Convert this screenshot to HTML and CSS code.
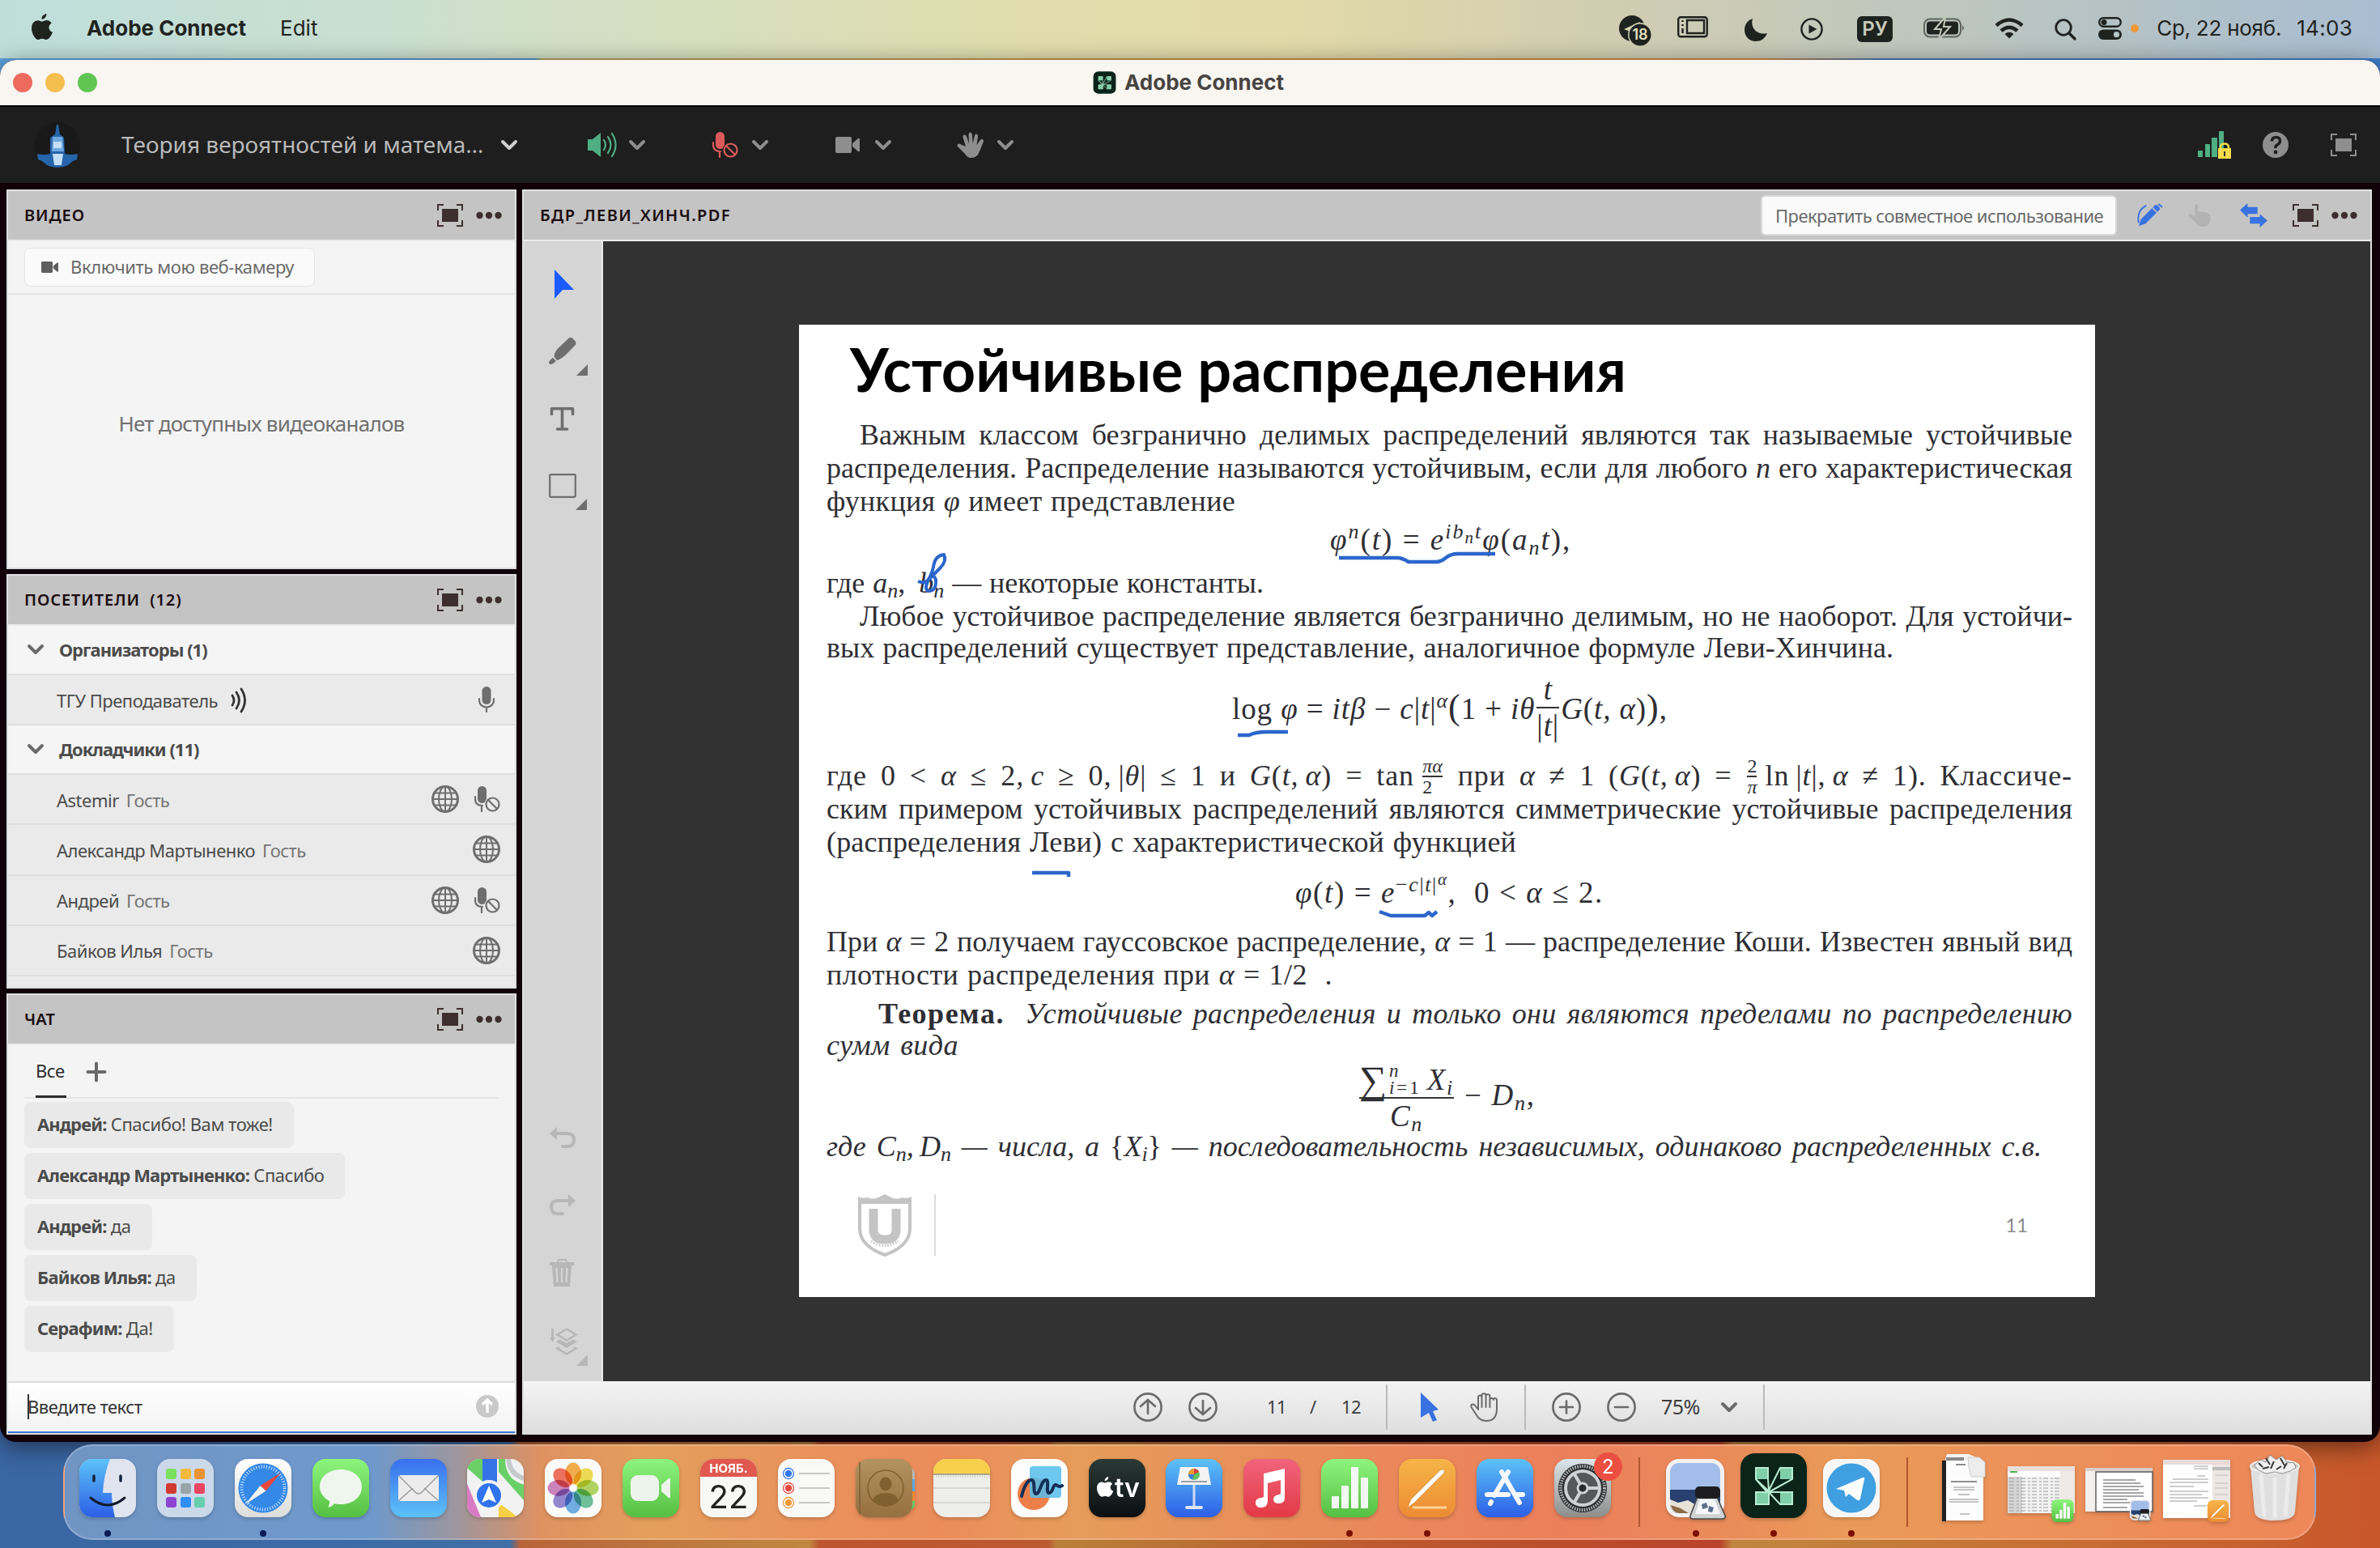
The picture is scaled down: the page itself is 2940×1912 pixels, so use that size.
FILE: index.html
```html
<!DOCTYPE html>
<html lang="ru">
<head>
<meta charset="utf-8">
<title>Adobe Connect</title>
<link rel="stylesheet" href="styles.css">
</head>
<body>
<svg class="defs" aria-hidden="true">
  <defs>
    <symbol id="chev" viewBox="0 0 22 14"><path d="M3 3l8 8 8-8" fill="none" stroke="currentColor" stroke-width="4" stroke-linecap="round" stroke-linejoin="round"/></symbol>
    <symbol id="full" viewBox="0 0 32 28"><path d="M1 8V1h7M24 1h7v7M31 20v7h-7M8 27H1v-7" fill="none" stroke="currentColor" stroke-width="2"/><path d="M6 6h20v16H6z" fill="currentColor"/></symbol>
    <symbol id="dots" viewBox="0 0 32 10"><g fill="currentColor"><circle cx="4.500" cy="5" r="4.200"/><circle cx="16" cy="5" r="4.200"/><circle cx="27.500" cy="5" r="4.200"/></g></symbol>
    <symbol id="cam" viewBox="0 0 30 20"><path d="M2 0h16a2 2 0 0 1 2 2v16a2 2 0 0 1-2 2H2a2 2 0 0 1-2-2V2a2 2 0 0 1 2-2zM21 8l7-6q2-1 2 1v14q0 2-2 1l-7-6z" fill="currentColor"/></symbol>
    <symbol id="mic" viewBox="0 0 20 32"><rect x="4.500" y="0" width="11" height="22" rx="5.500" fill="currentColor"/><path d="M1 15v2c0 5 4 8.500 9 8.500s9-3.500 9-8.500v-2M10 26v5" fill="none" stroke="currentColor" stroke-width="2.200" stroke-linecap="round"/></symbol>
    <symbol id="micoff" viewBox="0 0 32 32"><rect x="4" y="0" width="11" height="21" rx="5.500" fill="currentColor"/><path d="M1 13v3c0 5 3 8 9 8M9 25v6" fill="none" stroke="currentColor" stroke-width="2.200" stroke-linecap="round"/><circle cx="22.500" cy="22.500" r="10" fill="var(--under)"/><circle cx="22.500" cy="22.500" r="8" fill="none" stroke="currentColor" stroke-width="2.200"/><path d="M17 17l11 11" stroke="currentColor" stroke-width="2.200"/></symbol>
    <symbol id="globe" viewBox="0 0 34 34"><g fill="none" stroke="currentColor" stroke-width="2"><circle cx="17" cy="17" r="15.500" stroke-width="3"/><ellipse cx="17" cy="17" rx="8" ry="15.500"/><path d="M17 2v30M2 17h30M4 9.500h26M4 24.500h26"/></g></symbol>
    <symbol id="corner" viewBox="0 0 14 14"><path d="M14 0v14H0z" fill="currentColor"/></symbol>
    <symbol id="acon" viewBox="0 0 84 82"><rect x="1" y="1" width="82" height="80" rx="18" fill="#0b2419"/><g fill="#7fcfa9"><path d="M20 19h15v14H20zM50 19h15v14H50zM20 49h15v15H20zM50 49h15v15H50z"/></g><path d="M20 33l16 15v16H20V49h14l-14-16V19h15v14l1 14 14-28h15v14l-29 16h29v15H50L36 49" fill="none" stroke="#b8ecd2" stroke-width="2"/></symbol>
    <linearGradient id="gGreen" x1="0" y1="0" x2="0" y2="1"><stop offset="0" stop-color="#8df57d"/><stop offset="1" stop-color="#55bf42"/></linearGradient>
    <linearGradient id="gBlueUp" x1="0" y1="0" x2="0" y2="1"><stop offset="0" stop-color="#3a70ee"/><stop offset="1" stop-color="#5cc2f8"/></linearGradient>
    <linearGradient id="gBlueDn" x1="0" y1="0" x2="0" y2="1"><stop offset="0" stop-color="#5cc2f8"/><stop offset="1" stop-color="#2c5fe6"/></linearGradient>
    <linearGradient id="gOrange" x1="0" y1="0" x2="0" y2="1"><stop offset="0" stop-color="#f6b548"/><stop offset="1" stop-color="#ec8b33"/></linearGradient>
    <linearGradient id="gRed" x1="0" y1="0" x2="0" y2="1"><stop offset="0" stop-color="#f0647c"/><stop offset="1" stop-color="#e33a46"/></linearGradient>
    <linearGradient id="gWhite" x1="0" y1="0" x2="0" y2="1"><stop offset="0" stop-color="#ffffff"/><stop offset="1" stop-color="#dcdcda"/></linearGradient>
    <linearGradient id="gSteel" x1="0" y1="0" x2="0" y2="1"><stop offset="0" stop-color="#dbe5ea"/><stop offset="1" stop-color="#8d8d8b"/></linearGradient>
    <linearGradient id="gBlack" x1="0" y1="0" x2="0" y2="1"><stop offset="0" stop-color="#2b3a36"/><stop offset="1" stop-color="#0b0f12"/></linearGradient>
    <linearGradient id="gBrown" x1="0" y1="0" x2="0" y2="1"><stop offset="0" stop-color="#b3935f"/><stop offset="1" stop-color="#957040"/></linearGradient>
    <clipPath id="tile"><rect x="1" y="0" width="70" height="72" rx="16"/></clipPath>
    <symbol id="numbers" viewBox="0 0 72 72"><rect x="1" width="70" height="72" rx="16" fill="url(#gGreen)"/><g fill="#f4f8f4"><rect x="14" y="46" width="9" height="15" rx="1"/><rect x="26" y="33" width="9" height="28" rx="1"/><rect x="38" y="10" width="9" height="51" rx="1"/><rect x="50" y="23" width="9" height="38" rx="1"/></g></symbol>
    <symbol id="pages" viewBox="0 0 72 72"><rect x="1" width="70" height="72" rx="16" fill="url(#gOrange)"/><path d="M12 60l4-10 36-36q6-3 5 3L20 54z" fill="#fff" stroke="#d9a468"/><path d="M18 60h42" stroke="#fbd49a" stroke-width="3"/></symbol>
    <symbol id="preview" viewBox="0 0 74 76"><rect x="0" width="72" height="72" rx="16" fill="#f3f1f2"/><rect x="5" y="5" width="62" height="62" rx="11" fill="#a3bdea"/><path d="M5 38h62v18a11 11 0 0 1-11 11H16A11 11 0 0 1 5 56z" fill="#27406f"/><path d="M5 50l10 4 12-3 12 7 8 9H16A11 11 0 0 1 5 56z" fill="#e6e2d8"/><path d="M6 57l12 4 10 6H16Q8 66 6 57z" fill="#8b6a45"/><path d="M39 47h24l10 23q1 4-4 4H34q-5 0-4-4z" fill="#cfd3d6" stroke="#4a4a4a" stroke-width="1.600"/><path d="M42 50h18l7 18H36z" fill="#f4f6f8"/><path d="M44 56l6-2 2 6-7 2zM53 58l6 2-2 6-5-1z" fill="#5d6f8a"/><rect x="36" y="34" width="31" height="15" rx="5" fill="#1d1d1f"/></symbol>
  </defs>
</svg>

<header class="menubar">
  <svg class="apple" viewBox="0 0 28 34"><path d="M19 0c.4 3.500-2.500 7-6 7C12.600 3.500 15.800.4 19 0zM25.500 12c-5 3-4 9.500 1.500 11.500C25 28.500 22 33 18.500 33c-2 0-3-1.200-5-1.200S10.500 33 8.700 33C4.500 33 0 25 0 18.500 0 12 4 8.500 8 8.500c2.300 0 4.200 1.400 5.500 1.400S17 8.300 19.800 8.300c2.200 0 4.400 1.200 5.700 3.700z" fill="currentColor"/></svg>
  <b class="app-name">Adobe Connect</b>
  <span class="menu-item">Edit</span>
  <div class="status">
    <svg class="s-tg" viewBox="0 0 42 38"><circle cx="16" cy="16" r="16" fill="currentColor"/><path d="M6 17l20-9-3 17-7-4z" fill="#d5d2b0"/><circle cx="26" cy="24" r="15" fill="#d0cfb1"/><circle cx="26" cy="24" r="13.500" fill="currentColor"/><text x="26" y="30" class="tg-count">18</text></svg>
    <svg class="s-disp" viewBox="0 0 38 27"><g fill="none" stroke="currentColor" stroke-width="2.400"><rect x="1.200" y="1.200" width="35.500" height="24" rx="3"/><path d="M12 5h21v16H12zM6.500 5v2M6.500 10v2M6.500 15v6"/></g></svg>
    <svg class="s-moon" viewBox="0 0 28 28"><path d="M10 0C7 10 14 21 28 18 25 25 20 28 14 28 6 28 0 22 0 14 0 7 4 2 10 0z" fill="currentColor"/></svg>
    <svg class="s-play" viewBox="0 0 28 28"><circle cx="14" cy="14" r="12.600" fill="none" stroke="currentColor" stroke-width="2.400"/><path d="M10.500 8.500l10 5.500-10 5.500z" fill="currentColor"/></svg>
    <span class="lang">РУ</span>
    <svg class="s-batt" viewBox="0 0 52 26"><rect x="1" y="1.500" width="45" height="22" rx="7" fill="none" stroke="currentColor" stroke-width="2" opacity=".6"/><rect x="4" y="4.500" width="39" height="16" rx="4" fill="currentColor"/><path d="M48 9q4 3.500 0 7z" fill="currentColor" opacity=".6"/><path d="M27-1L14 14h8l-3 13 14-16h-8z" fill="currentColor" stroke="#c3c8ba" stroke-width="2"/></svg>
    <svg class="s-wifi" viewBox="0 0 36 26"><g fill="none" stroke="currentColor" stroke-width="4.400"><path d="M2 9.500Q18-4.500 34 9.500M8 16q10-8.500 20 0"/></g><path d="M12.500 20q5.500-4.500 11 0L18 25.500z" fill="currentColor"/></svg>
    <svg class="s-find" viewBox="0 0 27 27"><circle cx="11" cy="11" r="9.300" fill="none" stroke="currentColor" stroke-width="2.800"/><path d="M18 18l7 7" stroke="currentColor" stroke-width="3.400" stroke-linecap="round"/></svg>
    <svg class="s-cc" viewBox="0 0 29 28"><rect x="1.200" y="1.200" width="26.500" height="10.500" rx="5.200" fill="none" stroke="currentColor" stroke-width="2.400"/><circle cx="7" cy="6.500" r="3.500" fill="currentColor"/><rect y="15.500" width="29" height="12.500" rx="6.200" fill="currentColor"/><circle cx="22.500" cy="21.700" r="3.600" fill="#b4c4c4"/></svg>
    <span class="rec-dot"></span>
    <span class="date">Ср, 22 нояб.</span>
    <span class="time">14:03</span>
  </div>
</header>

<main class="window">
  <div class="titlebar">
    <span class="light red"></span><span class="light yellow"></span><span class="light green"></span>
    <div class="win-title"><svg viewBox="0 0 84 82"><use href="#acon"/></svg><b>Adobe Connect</b></div>
  </div>

  <div class="toolbar">
    <svg class="room-logo" viewBox="0 0 56 62"><circle cx="28" cy="31" r="28" fill="#191919"/><path d="M27 6h2l2 12 5 4 1 20q8 2 16 0l-1 7-5 2-6 5q-13 6-26 0l-6-5-5-2-1-7q8 2 16 0V22l6-4z" fill="#2565ab"/><path d="M22 21h12l2 18H21z" fill="#6fa9df"/><path d="M23 27h10v8H23zM22 42h13l-2 14h-9z" fill="#c3def5"/></svg>
    <span class="room">Теория вероятностей и матема…</span>
    <svg class="chev room-chev"><use href="#chev"/></svg>
    <svg class="t-speaker" viewBox="0 0 36 32"><path d="M0 9h6l10-8v30L6 23H0z" fill="currentColor"/><g fill="none" stroke="currentColor" stroke-width="2.200" stroke-linecap="round"><path d="M20 10q4 6 0 12M25 6q7 10 0 20M30 2q9 14 0 28"/></g></svg>
    <svg class="chev"><use href="#chev"/></svg>
    <svg class="t-mic"><use href="#micoff"/></svg>
    <svg class="chev"><use href="#chev"/></svg>
    <svg class="t-cam"><use href="#cam"/></svg>
    <svg class="chev"><use href="#chev"/></svg>
    <svg class="t-hand" viewBox="0 0 34 32"><path d="M11 18L7.500 6.500q-.5-2.500 1.500-3t3 2l3 9L14.500 3q0-2.500 2-2.500t2.300 2.500l1 11 2.200-9.500q.8-2.400 2.600-1.800t1.400 2.800L24.500 16l4.500-6q1.500-1.800 3-.8t.8 3L28 24q-3 8-10 8-5 0-8-5L1 18q-1.300-2 .3-3t3.200.3z" fill="currentColor"/></svg>
    <svg class="chev"><use href="#chev"/></svg>
    <div class="tools-right">
      <svg class="t-signal" viewBox="0 0 42 34"><g fill="#4fae83"><path d="M0 24h6v8H0zM9 16h6v16H9zM17 8h7v24h-7zM26 0h6v32h-6z"/></g><path d="M25 21h16v13H25z" fill="#f4dc4a"/><path d="M28 22v-2q0-4.500 5-4.500t5 4.500v2" fill="none" stroke="#f4dc4a" stroke-width="2.500"/><path d="M32 25h2v6h-2z" fill="#333"/></svg>
      <svg class="t-help" viewBox="0 0 32 32"><circle cx="16" cy="16" r="16" fill="currentColor"/><path d="M11.500 11.500q0-5 5-5t5 4.500q0 3-3 4.500t-2.500 4.500" fill="none" stroke="#1e1e1e" stroke-width="3.400"/><circle cx="16" cy="25" r="2.400" fill="#1e1e1e"/></svg>
      <svg class="t-full"><use href="#full"/></svg>
    </div>
  </div>

  <div class="workspace">
    <aside class="left">
      <section class="pod pod-video">
        <div class="pod-head"><h2>ВИДЕО</h2><svg class="i-full"><use href="#full"/></svg><svg class="i-dots"><use href="#dots"/></svg></div>
        <div class="video-bar"><button class="btn-cam"><svg><use href="#cam"/></svg><span>Включить мою веб-камеру</span></button></div>
        <div class="video-empty">Нет доступных видеоканалов</div>
      </section>

      <section class="pod pod-people">
        <div class="pod-head"><h2>ПОСЕТИТЕЛИ &nbsp;(12)</h2><svg class="i-full"><use href="#full"/></svg><svg class="i-dots"><use href="#dots"/></svg></div>
        <div class="group"><svg class="chev"><use href="#chev"/></svg><b>Организаторы (1)</b></div>
        <div class="person host"><span>ТГУ Преподаватель</span>
          <svg class="waves" viewBox="0 0 20 32"><g fill="none" stroke="currentColor" stroke-width="2.800" stroke-linecap="round"><path d="M2 10q4 6 0 12M7 6q7 10 0 20M13 2q9 14 0 28"/></g></svg>
          <span class="p-icons"><svg class="i-mic"><use href="#mic"/></svg></span></div>
        <div class="group"><svg class="chev"><use href="#chev"/></svg><b>Докладчики (11)</b></div>
        <div class="person"><span>Astemir</span><em>Гость</em><span class="p-icons"><svg class="i-globe"><use href="#globe"/></svg><svg class="i-micoff"><use href="#micoff"/></svg></span></div>
        <div class="person"><span>Александр Мартыненко</span><em>Гость</em><span class="p-icons"><svg class="i-globe"><use href="#globe"/></svg></span></div>
        <div class="person"><span>Андрей</span><em>Гость</em><span class="p-icons"><svg class="i-globe"><use href="#globe"/></svg><svg class="i-micoff"><use href="#micoff"/></svg></span></div>
        <div class="person"><span>Байков Илья</span><em>Гость</em><span class="p-icons"><svg class="i-globe"><use href="#globe"/></svg></span></div>
        <div class="person"></div>
      </section>

      <section class="pod pod-chat">
        <div class="pod-head"><h2>ЧАТ</h2><svg class="i-full"><use href="#full"/></svg><svg class="i-dots"><use href="#dots"/></svg></div>
        <div class="tabs"><span class="tab">Все</span><svg class="plus" viewBox="0 0 24 24"><path d="M12 1.500v21M1.500 12h21" stroke="#6a6a6a" stroke-width="4" stroke-linecap="round"/></svg></div>
        <div class="messages">
          <p class="msg"><b>Андрей:</b> Спасибо! Вам тоже!</p>
          <p class="msg"><b>Александр Мартыненко:</b> Спасибо</p>
          <p class="msg"><b>Андрей:</b> да</p>
          <p class="msg"><b>Байков Илья:</b> да</p>
          <p class="msg"><b>Серафим:</b> Да!</p>
        </div>
        <div class="chat-input"><span class="caret"></span><span>Введите текст</span>
          <svg class="send" viewBox="0 0 28 28"><circle cx="14" cy="14" r="14" fill="#c9c9c9"/><path d="M14 22V7M8 12l6-6 6 6" fill="none" stroke="#fff" stroke-width="3.400"/></svg></div>
      </section>
    </aside>

    <section class="pod share">
      <div class="pod-head"><h2>БДР_ЛЕВИ_ХИНЧ.PDF</h2>
        <button class="btn-stop">Прекратить совместное использование</button>
        <svg class="h-pen" viewBox="0 0 34 32"><path d="M2 30l3-9L23 3q2-2 4 0l2 2q2 2 0 4L11 27z" fill="#3871e0"/><path d="M20 6l7 7" stroke="#c4c4c4" stroke-width="1.600"/><path d="M2 26Q-1 9 12 3M28 1l5 4" fill="none" stroke="#3871e0" stroke-width="2"/></svg>
        <svg class="h-tap" viewBox="0 0 28 28"><path d="M8 15V2.500Q8 0 10 0t2 2.500V10q2-1.500 4 0 2-1 4 .5 2-.5 4 .7 3.500 1 3.500 5.300 0 11.500-9 11.500-6 0-9-5L1 15.500q-1.500-2.500 1-3.500 1.500-.5 3 1z" fill="#b3b3b3"/></svg>
        <svg class="h-sync" viewBox="0 0 36 32"><path d="M0 9L10 0v5h13v9H10v5zM36 23L26 14v4H13v9h13v5z" fill="#3871e0"/></svg>
        <svg class="i-full"><use href="#full"/></svg><svg class="i-dots"><use href="#dots"/></svg>
      </div>
      <div class="share-body">
        <nav class="drawbar">
          <svg class="d-arrow" viewBox="0 0 24 36"><path d="M0 0l24 25H10L0 36z" fill="#1a5cff"/></svg>
          <div class="d-item d-pen"><svg class="g" viewBox="0 0 36 36"><path d="M7 25q1-6 5-10L26 1.500q2-1.500 4 0l4 4q2 2 .5 4.500L22 23q-5 5-11 7z" fill="#6e6e6e"/><path d="M5.500 26.500l4 4q-3 4-7.500 4.500Q0 34 .5 32q2-3 5-5.500z" fill="#6e6e6e"/></svg><svg class="corner"><use href="#corner"/></svg></div>
          <svg class="d-text" viewBox="0 0 29 29"><path d="M1.500 8.500V1.700h26v6.800M14.500 2v24.500M8.500 27h12" fill="none" stroke="#6e6e6e" stroke-width="3.600" stroke-linecap="round" stroke-linejoin="round"/></svg>
          <div class="d-item d-rect"><svg class="g" viewBox="0 0 34 30"><rect x="1.200" y="1.200" width="31.600" height="27.600" rx="1" fill="none" stroke="#6e6e6e" stroke-width="2.200"/></svg><svg class="corner"><use href="#corner"/></svg></div>
          <svg class="d-undo" viewBox="0 0 32 26"><path d="M0 8l9-8v16z" fill="#b7b7b7"/><path d="M8 8h14q8 0 8 8t-8 8h-6" fill="none" stroke="#b7b7b7" stroke-width="4" stroke-linecap="round"/></svg>
          <svg class="d-redo" viewBox="0 0 32 26"><path d="M32 8l-9-8v16z" fill="#b7b7b7"/><path d="M24 8H10q-8 0-8 8t8 8h6" fill="none" stroke="#b7b7b7" stroke-width="4" stroke-linecap="round"/></svg>
          <svg class="d-trash" viewBox="0 0 30 34"><path d="M0 4h30v4h-3l-2 26H5L3 8H0zM9.500 4V1.500Q9.500 0 11 0h9q1.500 0 1.500 1.500V4h-2V2h-8v2z" fill="#b7b7b7"/><path d="M8.500 11l1 18M15 11v18M21.500 11l-1 18" stroke="#d5d5d5" stroke-width="2.200"/></svg>
          <div class="d-item d-layers"><svg class="g" viewBox="0 0 34 34"><g fill="none" stroke="#b7b7b7" stroke-width="2.600"><path d="M3.500 1v12" stroke-width="3"/><path d="M21 1.500l11.500 7L21 15.500 9.500 8.500zM12 24l-2.500 1.500L21 32.500l11.500-7L30 24"/></g><path d="M0 12h7l-3.500 6zM8 17l4.500-2.500L21 19l8.500-4.500L34 17 21 25z" fill="#b7b7b7"/></svg><svg class="corner"><use href="#corner"/></svg></div>
        </nav>
        <div class="canvas">
          <article class="slide">
            <h1>Устойчивые распределения</h1>
            <div class="ln in1">Важным классом безгранично делимых распределений являются так называемые устойчивые</div>
            <div class="ln">распределения. Распределение называются устойчивым, если для любого <i>n</i> его характеристическая</div>
            <div class="ln w505">функция <i>φ</i> имеет представление</div>
            <div class="eq eq1"><i>φ<sup>n</sup></i>(<i>t</i>) = <i>e<sup>ib<sub>n</sub>t</sup>φ</i>(<i>a<sub>n</sub>t</i>),</div>
            <div class="ln w540">где <i>a<sub>n</sub></i>,&thinsp; <i>b<sub>n</sub></i> — некоторые константы.</div>
            <div class="ln in1 h39">Любое устойчивое распределение является безгранично делимым, но не наоборот. Для устойчи-</div>
            <div class="ln w1318">вых распределений существует представление, аналогичное формуле Леви-Хинчина.</div>
            <div class="eq eq2">log <i>φ</i> = <i>itβ</i> − <i>c</i>|<i>t</i>|<sup><i>α</i></sup><span class="big">(</span>1 + <i>iθ</i><span class="frac"><i>t</i><span>|<i>t</i>|</span></span><i>G</i>(<i>t, α</i>)<span class="big">)</span>,</div>
            <div class="ln math">где 0 &lt; <i>α</i> ≤ 2<i>,&thinsp;c</i> ≥ 0,&thinsp;|<i>θ</i>| ≤ 1 и <i>G</i>(<i>t,&thinsp;α</i>) = tan&thinsp;<span class="frac sm"><i>πα</i><span>2</span></span> при <i>α</i> ≠ 1 (<i>G</i>(<i>t,&thinsp;α</i>) = <span class="frac sm"><span>2</span><i>π</i></span>&thinsp;ln&thinsp;|<i>t</i>|,&thinsp;<i>α</i> ≠ 1). Классиче-</div>
            <div class="ln">ским примером устойчивых распределений являются симметрические устойчивые распределения</div>
            <div class="ln w852">(распределения Леви) с характеристической функцией</div>
            <div class="eq eq3"><i>φ</i>(<i>t</i>) = <i>e</i><sup>−<i>c</i>|<i>t</i>|<sup><i>α</i></sup></sup>, &nbsp;0 &lt; <i>α</i> ≤ 2.</div>
            <div class="ln">При <i>α</i> = 2 получаем гауссовское распределение, <i>α</i> = 1 — распределение Коши. Известен явный вид</div>
            <div class="ln w625 last">плотности распределения при <i>α</i> = 1/2 &nbsp;.</div>
            <div class="ln in2 h39 it"><b>Теорема.</b> <i>Устойчивые распределения и только они являются пределами по распределению</i></div>
            <div class="ln w163"><i>сумм вида</i></div>
            <div class="eq eq4"><span class="frac sum"><span class="num"><span class="sigma">∑</span><span class="lim"><i>n</i><span><i>i</i>=1</span></span><i>X<sub>i</sub></i></span><i>C<sub>n</sub></i></span> − <i>D<sub>n</sub></i>,</div>
            <div class="ln w1501"><i>где C<sub>n</sub>,&thinsp;D<sub>n</sub> — числа, а </i>{<i>X<sub>i</sub></i>}<i> — последовательность независимых, одинаково распределенных с.в.</i></div>
            <footer class="slide-foot">
              <svg class="shield" viewBox="0 0 68 78"><path d="M3 8h62v34Q65 64 34 75 3 64 3 42z" fill="#fff" stroke="#c4c4c4" stroke-width="4"/><path d="M1 3q4 3 12 1 6 3 13 0l8-4 8 4q7 3 13 0 8 2 12-1v9H1z" fill="#c4c4c4"/><path d="M20 18v26q0 12 14 12t14-12V18" fill="none" stroke="#c4c4c4" stroke-width="11"/><path d="M17 58q17 11 34 0" fill="none" stroke="#d0d0d0" stroke-width="3" stroke-dasharray="2 1.500"/></svg>
              <span class="foot-line"></span><span class="page-no">11</span>
            </footer>
            <svg class="ink" viewBox="0 0 1600 1201"><g fill="none" stroke="#2b66cc" stroke-width="4.500" stroke-linejoin="round"><path d="M667 288h72q6 0 14 5h34q6 0 12-5t15-5h46"/><path stroke-width="4" d="M147 317q10 4 14-4t5-14q2-14 13-15 4 8-5 17l-14 14q-6 12 0 14 10 0 9-14-2-6-6-4"/><path d="M542 507h14q8-4 22-4h26M288 677h45v5M717 725l14 5h42l5-4 4 4 6-5"/></g></svg>
          </article>
        </div>
      </div>
      <div class="pagebar">
        <svg class="b-round b-up" viewBox="0 0 36 36"><g fill="none" stroke="currentColor" stroke-width="2.600"><circle cx="18" cy="18" r="16.600"/><path d="M18 26V11M9 17l9-8 9 8" stroke-linecap="round"/></g></svg>
        <svg class="b-round b-down" viewBox="0 0 36 36"><g fill="none" stroke="currentColor" stroke-width="2.600"><circle cx="18" cy="18" r="16.600"/><path d="M18 10v15M9 19l9 8 9-8" stroke-linecap="round"/></g></svg>
        <span class="pg-cur">11</span><span class="pg-slash">/</span><span class="pg-all">12</span>
        <div class="pg-group pointer">
          <svg class="b-cursor" viewBox="0 0 22 36"><path d="M0 0l22 21-7 2 5 11-5 2-5-11-10 6z" fill="#3871e0"/></svg>
          <svg class="b-hand" viewBox="0 0 34 36"><path d="M10 21V6q0-2.500 2.200-2.500T14.500 6v12V3.500Q14.500 1.200 17 1.200t2.500 2.300V18 4.500Q19.500 2.300 22 2.300t2.400 2.200V18 9q0-2 2.200-2T29 9q0-2.300 2-2t2 2.500V20q0 15-13 15-8 0-12-7L1.500 18q-1-3 1.500-3.500 2-.3 3.500 2z" fill="none" stroke="#6a6a6a" stroke-width="2" stroke-linejoin="round"/></svg>
        </div>
        <div class="pg-group zoom">
          <svg class="b-round" viewBox="0 0 36 36"><g fill="none" stroke="currentColor" stroke-width="2.600"><circle cx="18" cy="18" r="16.600"/><path d="M18 10.500v15M10 18h16" stroke-linecap="round"/></g></svg>
          <svg class="b-round" viewBox="0 0 36 36"><g fill="none" stroke="currentColor" stroke-width="2.600"><circle cx="18" cy="18" r="16.600"/><path d="M10 18h16" stroke-linecap="round"/></g></svg>
          <span class="pct">75%</span><svg class="chev"><use href="#chev"/></svg>
        </div>
      </div>
    </section>
  </div>
</main>

<footer class="dock">
  <div class="slot on"><svg viewBox="0 0 72 72"><g clip-path="url(#tile)"><path d="M0 0h72v72H0z" fill="#dfe4ee"/><path d="M0 0h39Q31 20 30 42h11q0 14 4 30H0z" fill="url(#gBlueDn)"/></g><path d="M19 21v6M52 21v6" stroke="#16233c" stroke-width="3.500" stroke-linecap="round"/><path d="M15 48q21 18 42 0" fill="none" stroke="#111b2c" stroke-width="3" stroke-linecap="round"/></svg></div>
  <div class="slot"><svg viewBox="0 0 72 72"><rect x="1" width="70" height="72" rx="16" fill="#cbd8ea"/><rect x="12" y="12" width="13" height="13" rx="3" fill="#7be05e"/><rect x="30" y="12" width="13" height="13" rx="3" fill="#f5b93e"/><rect x="47" y="12" width="13" height="13" rx="3" fill="#ea9334"/><rect x="12" y="30" width="13" height="13" rx="3" fill="#d13a30"/><rect x="30" y="30" width="13" height="13" rx="3" fill="#97a4aa"/><rect x="47" y="30" width="13" height="13" rx="3" fill="#ef4560"/><rect x="12" y="47" width="13" height="13" rx="3" fill="#8e44d0"/><rect x="30" y="47" width="13" height="13" rx="3" fill="#2f8df3"/><rect x="47" y="47" width="13" height="13" rx="3" fill="#64cfae"/></svg></div>
  <div class="slot on"><svg viewBox="0 0 72 72"><rect x="1" width="70" height="72" rx="16" fill="url(#gWhite)"/><circle cx="36" cy="36" r="30.500" fill="#3388e8"/><circle cx="36" cy="36" r="26.500" fill="none" stroke="#d7e9fb" stroke-width="4" stroke-dasharray="1 2.200"/><path d="M58 17L32.500 33l7 6.500z" fill="#e8483c"/><path d="M14 56l18.500-23 7 6.500z" fill="#f4f4f4"/></svg></div>
  <div class="slot"><svg viewBox="0 0 72 72"><rect x="1" width="70" height="72" rx="16" fill="url(#gGreen)"/><path d="M36 13c15 0 26 9 26 21.500S51 56 36 56c-3 0-5.500-.3-8-1-2 3-5 4.500-8 4.500 1.500-2.500 2.500-5 2-7.500-7-4-12-10-12-17.500C10 22 21 13 36 13z" fill="#eff6ee"/></svg></div>
  <div class="slot"><svg viewBox="0 0 72 72"><rect x="1" width="70" height="72" rx="16" fill="url(#gBlueUp)"/><rect x="11" y="20" width="50" height="32" rx="3" fill="#ececec"/><path d="M12 21l20 20q4 4 8 0l20-20M12 51l17-15M60 51L43 36" fill="none" stroke="#999" stroke-width="1.400"/></svg></div>
  <div class="slot"><svg viewBox="0 0 72 72"><g clip-path="url(#tile)"><path d="M0 0h72v72H0z" fill="#f1f2f1"/><path d="M0 0h20v28L0 10zM40 0h8q0 26 24 32v20L40 16z" fill="#69d067"/><path d="M20 0h18v34H20z" fill="#3474e8"/><path d="M0 28l18 44H0z" fill="#d97ac4"/><path d="M40 54l24 18H40z" fill="#f6cf45"/><path d="M52 0q2 20 20 24" fill="none" stroke="#c4c9cc" stroke-width="6"/></g><circle cx="28" cy="45" r="17" fill="#2f74ee" stroke="#f4f4f4" stroke-width="4"/><path d="M28 33l9 21-9-4-9 4z" fill="#fff"/></svg></div>
  <div class="slot"><svg viewBox="0 0 72 72"><rect x="1" width="70" height="72" rx="16" fill="#fbfbfa"/><g class="petals" transform="translate(36 36)"><ellipse cy="-18" rx="10" ry="13.500" fill="#f5a131"/><ellipse cy="-18" rx="10" ry="13.500" transform="rotate(45)" fill="#ecd936"/><ellipse cy="-18" rx="10" ry="13.500" transform="rotate(90)" fill="#a5cf4a"/><ellipse cy="-18" rx="10" ry="13.500" transform="rotate(135)" fill="#58b98a"/><ellipse cy="-18" rx="10" ry="13.500" transform="rotate(180)" fill="#5aa1e0"/><ellipse cy="-18" rx="10" ry="13.500" transform="rotate(225)" fill="#8274c9"/><ellipse cy="-18" rx="10" ry="13.500" transform="rotate(270)" fill="#c770b4"/><ellipse cy="-18" rx="10" ry="13.500" transform="rotate(315)" fill="#ee5a45"/></g></svg></div>
  <div class="slot"><svg viewBox="0 0 72 72"><rect x="1" width="70" height="72" rx="16" fill="url(#gGreen)"/><rect x="11" y="20" width="35" height="32" rx="9" fill="#edf4ec"/><path d="M49 32l9-8q2-1.500 2 1v22q0 2.500-2 1l-9-8z" fill="#edf4ec"/></svg></div>
  <div class="slot"><svg viewBox="0 0 72 72"><g clip-path="url(#tile)"><path d="M0 0h72v72H0z" fill="#f8f8f7"/><path d="M0 0h72v22H0z" fill="#e0584f"/></g><text x="36" y="17" class="cal-m">НОЯБ.</text><text x="36" y="61" class="cal-d">22</text></svg></div>
  <div class="slot"><svg viewBox="0 0 72 72"><rect x="1" width="70" height="72" rx="16" fill="#f9f9f8"/><path d="M27 18h38M27 36h38M27 54h38" stroke="#b6b6b6" stroke-width="1.600"/><g stroke="#fff" stroke-width="1.500"><circle cx="14" cy="18" r="5" fill="#3478f6"/><circle cx="14" cy="36" r="5" fill="#e5483d"/><circle cx="14" cy="54" r="5" fill="#ee9a3a"/></g><g fill="none" stroke-width="1.300"><circle cx="14" cy="18" r="6.500" stroke="#3478f6"/><circle cx="14" cy="36" r="6.500" stroke="#e5483d"/><circle cx="14" cy="54" r="6.500" stroke="#ee9a3a"/></g></svg></div>
  <div class="slot"><svg viewBox="0 0 72 72"><path d="M66 10q8 2 8 8v7h-8z" fill="#b9b9b9"/><path d="M66 25h8v15h-8z" fill="#5ba7e6"/><path d="M66 40h8v12h-8z" fill="#ef8a2f"/><path d="M66 52h8v4q0 6-8 8z" fill="#67c968"/><rect x="1" width="70" height="72" rx="16" fill="url(#gBrown)"/><path d="M6 4v64" stroke="#7f5f34" stroke-width="1.500"/><circle cx="38" cy="36" r="22" fill="none" stroke="#81602f" stroke-width="1.600"/><ellipse cx="38" cy="31" rx="7.500" ry="8.500" fill="#81602f"/><path d="M22 51q3-9 16-9t16 9q-7 7-16 7t-16-7z" fill="#81602f"/></svg></div>
  <div class="slot"><svg viewBox="0 0 72 72"><g clip-path="url(#tile)"><path d="M0 0h72v72H0z" fill="#eeeeea"/><path d="M0 0h72v18H0z" fill="#f8cf4b"/><path d="M0 19h72" stroke="#a9a389" stroke-width="2"/><path d="M4 22h68" stroke="#ccc" stroke-width="2" stroke-dasharray="1 2"/><path d="M0 36h72M0 54h72" stroke="#cfcfcc" stroke-width="1.500"/></g></svg></div>
  <div class="slot"><svg viewBox="0 0 72 72"><rect x="1" width="70" height="72" rx="16" fill="#fdfdfd"/><circle cx="29" cy="43" r="20" fill="#ee7f4a"/><rect x="24" y="9" width="39" height="39" rx="4" fill="#55bdec" opacity=".85"/><path d="M14 46c5-20 11-20 12-20 6 0 1 17 6 17s6-17 12-17c5 0-1 16 4 16s4-10 8-10c3 0 2 4 8 1" fill="none" stroke="#152f57" stroke-width="4" stroke-linecap="round"/></svg></div>
  <div class="slot"><svg viewBox="0 0 72 72"><rect x="1" width="70" height="72" rx="16" fill="url(#gBlack)"/><path transform="translate(11 22) scale(.75)" d="M19 0c.4 3.500-2.500 7-6 7C12.600 3.500 15.800.4 19 0zM25.500 12c-5 3-4 9.500 1.500 11.500C25 28.500 22 33 18.500 33c-2 0-3-1.200-5-1.200S10.500 33 8.700 33C4.500 33 0 25 0 18.500 0 12 4 8.500 8 8.500c2.300 0 4.200 1.400 5.500 1.400S17 8.300 19.800 8.300c2.200 0 4.400 1.200 5.700 3.700z" fill="#fff"/><text x="33" y="47" class="tv">tv</text></svg></div>
  <div class="slot"><svg viewBox="0 0 72 72"><rect x="1" width="70" height="72" rx="16" fill="url(#gBlueDn)"/><path d="M19 10h34l4 22H15z" fill="#f3f3f3"/><path d="M20 28h32" stroke="#9aa0a8" stroke-width="2"/><circle cx="36" cy="19" r="7" fill="#5fbf62"/><path d="M36 19v-7a7 7 0 0 0-7 7z" fill="#ef9a35"/><path d="M36 19v-7a7 7 0 0 1 6 4z" fill="#d9433c"/><path d="M36 19h-7a7 7 0 0 0 5 6.500z" fill="#3c7fe0"/><path d="M36 32v27" stroke="#cfdcf0" stroke-width="3"/><rect x="25" y="58" width="22" height="4" rx="2" fill="#dfe5ee"/></svg></div>
  <div class="slot"><svg viewBox="0 0 72 72"><rect x="1" width="70" height="72" rx="16" fill="url(#gRed)"/><path d="M26 18l26-6v36q0 7-7 7t-7-5 7-6l2-1V26l-16 4v22q0 7-7 8t-8-5 7-7l3-1z" fill="#fff"/></svg></div>
  <div class="slot on warm"><svg><use href="#numbers"/></svg></div>
  <div class="slot on warm"><svg><use href="#pages"/></svg></div>
  <div class="slot"><svg viewBox="0 0 72 72"><rect x="1" width="70" height="72" rx="16" fill="url(#gBlueDn)"/><g stroke="#f5f8fc" stroke-width="6" stroke-linecap="round"><path d="M40 16L23 45M32 16l22 38M14 44h26M50 44h8M19 53l-1 2"/></g></svg></div>
  <div class="slot"><svg viewBox="0 0 72 72"><rect x="1" width="70" height="72" rx="16" fill="url(#gSteel)"/><circle cx="36" cy="36" r="30" fill="#2a2b2c"/><circle cx="36" cy="36" r="27" fill="none" stroke="#b9bdbf" stroke-width="4" stroke-dasharray="1.500 1.500"/><circle cx="36" cy="36" r="21" fill="#55585a" stroke="#cfd2d3" stroke-width="4"/><circle cx="36" cy="36" r="6" fill="#2a2b2c" stroke="#cfd2d3" stroke-width="3"/><path d="M42 36h15M33 31L25.500 18M33 41l-7.500 13" stroke="#cfd2d3" stroke-width="4"/></svg><span class="badge">2</span></div>
  <div class="sep"></div>
  <div class="slot on warm"><svg class="tall"><use href="#preview"/></svg></div>
  <div class="slot on warm"><svg class="connect"><use href="#acon"/></svg></div>
  <div class="slot on warm"><svg viewBox="0 0 72 72"><rect x="1" width="70" height="72" rx="16" fill="#f7f7f7"/><circle cx="36" cy="36" r="30.500" fill="#3f9fe0"/><path d="M17 37l33-14q3-1 2 2l-5 24q-1 4-5 1l-9-7-4 4-2-8z" fill="#fff"/></svg></div>
  <div class="sep"></div>
  <div class="slot"><svg class="stack" viewBox="0 0 54 86"><path d="M6 2h27l14 6v75H4V8z" fill="#f4f4f4"/><path d="M0 10h5v75H0z" fill="#222"/><path d="M5 10h46v74H5z" fill="#fdfdfd"/><path d="M5 6h22v4H5z" fill="#888"/><path d="M32 6h14l7 6v18H36q-4-10-4-24z" fill="#ececec" stroke="#ccc"/><g stroke="#8d8d8d"><path d="M17 15h12M11 36h32" stroke-width="2"/><path d="M14 43h26M14 46h26M20 52h14M9 58h36M9 61h36M22 76h12"/></g></svg></div>
  <div class="slot"><svg class="thumb" viewBox="0 0 84 76"><path d="M0 9h83v58H0z" fill="#fbfbfb"/><path d="M0 9h83v6H0z" fill="#eadfdc"/><path d="M65 15h18v52H65z" fill="#f0e8e6"/><path d="M3 15h9v2H3z" fill="#4bb35a"/><path d="M0 22h65v45H0z" fill="#f2f2f2"/><path d="M0 22h18v45H0z" fill="#d5d5d5"/><path d="M2 24h62M2 28h62M2 32h62M2 36h62M2 40h62M2 44h62M2 48h62M2 52h62M2 56h62M2 60h62M2 64h62" stroke="#9d9d9d" stroke-dasharray="6 3 3 2"/><svg x="54" y="50" width="28" height="28"><use href="#numbers"/></svg></svg></div>
  <div class="slot"><svg class="thumb" viewBox="0 0 84 76"><path d="M0 11h83v54H0z" fill="#f3efee"/><path d="M0 11h83v4H0z" fill="#d9cecb"/><path d="M13 16h70v49H13z" fill="#fff" stroke="#555" stroke-width="1.400"/><path d="M22 26h40M22 30h46M22 34h50M22 38h44M22 42h50M22 46h50M22 50h30M22 54h46M22 60h30" stroke="#8a8a8a" stroke-width="1.400"/><svg x="54" y="50" width="28" height="27"><use href="#preview"/></svg></svg></div>
  <div class="slot"><svg class="thumb" viewBox="0 0 84 76"><path d="M0 1h83v72H0z" fill="#fff"/><path d="M0 1h83v6H0z" fill="#e8dbd8"/><path d="M61 7h22v66H61z" fill="#eee6e4"/><path d="M61 10h22v4H61z" fill="#bbb"/><path d="M38 9h18M38 12h18M42 21h10M12 25h44M8 29h48M8 34h30M8 40h48M8 44h40M8 48h48M8 52h34M38 58h16" stroke="#9c9c9c"/><path d="M64 20h16M64 30h16M64 36h16M64 44h16" stroke="#c4bab8"/><svg x="54" y="51" width="28" height="27"><use href="#pages"/></svg></svg></div>
  <div class="slot"><svg class="trash" viewBox="0 0 62 82"><path d="M1 14h60l-5 56q-1 11-25 11T6 70z" fill="#e0dfdf"/><path d="M14 26l4 48M31 30v46M48 26l-4 48" fill="none" stroke="#ececec" stroke-width="5" stroke-linecap="round"/><ellipse cx="31" cy="14" rx="30" ry="8" fill="#cfc9c6" stroke="#f2f2f2" stroke-width="2"/><path d="M6 13l7-7 7 3 5-9 8 6 7-5 6 8 9 1 2 6-7 4-10 3-9-2-11 2-9-4z" fill="#f0f0f0" stroke="#777" stroke-width=".8"/><path d="M11 10l5 5M20 4l5 8M30 8l-4 9M38 4l5 9M46 10l-4 7M16 17l8-2M33 18l6-4" stroke="#3a3a3a" stroke-width="2"/></svg></div>
</footer>
</body>
</html>
```
FILE: styles.css
```css
* { box-sizing: border-box; }
html, body { margin: 0; }
body {
  width: 2940px; height: 1912px; overflow: hidden;
  display: grid; grid-template-rows: 72px 1709px 131px;
  font-family: "Noto Sans", "Open Sans", sans-serif;
  background:
    linear-gradient(90deg, #5ba3dc 0, #5192c8 660px, #b3a25a 670px, #bd9a50 1100px, #d09040 1500px, #d08a44 2180px, #3f74b4 2330px, #3f7fcb 2940px) 0 0 / 100% 110px no-repeat,
    linear-gradient(90deg, #3a66a3 0, #3f6ea6 630px, #b8643a 642px, #c08840 1000px, #bf5530 1012px, #bb5a30 1295px, #b98039 1305px, #bd5a2f 1700px, #b9432a 2125px, #c0863f 2140px, #c67a38 2350px, #c8572b 2940px);
}
h1, h2, p { margin: 0; font-weight: inherit; font-size: inherit; }
button { font: inherit; letter-spacing: inherit; border: 0; padding: 0; background: none; text-align: left; }
svg { display: block; flex: none; overflow: visible; }
.defs { position: absolute; width: 0; height: 0; }

/* menu bar */
.menubar {
  display: flex; align-items: center; padding: 0 34px 2px 39px; height: 72px;
  color: #1f2320; font-family: Inter, sans-serif; font-size: 26px; line-height: 70px;
  background: linear-gradient(90deg, #bfdedb 0, #c8dfd2 14%, #d6dfc0 28%, #e1dcab 44%, #e2daa8 54%, #d3ceb0 66%, #bdc6bf 82%, #a8bdd1 100%);
}
.apple { width: 27px; height: 33px; margin-right: 41px; margin-top: -3px; }
.app-name { margin-right: 42px; white-space: nowrap; }
.status { margin-left: auto; display: flex; align-items: center; white-space: nowrap; }
.s-tg { width: 42px; height: 38px; margin-right: 30px; margin-top: 5px; }
.tg-count { font-size: 18px; text-anchor: middle; fill: #e4e1c0; font-weight: 600; }
.s-disp { width: 38px; height: 27px; margin-right: 45px; margin-top: -4px; }
.s-moon { width: 28px; height: 28px; margin-right: 41px; margin-top: 3px; }
.s-play { width: 28px; height: 28px; margin-right: 42px; margin-top: 1px; }
.lang { width: 44px; height: 32px; margin-right: 38px; margin-top: 1px; background: #1f2320; color: #c7cab8; border-radius: 6px; font-size: 24px; font-weight: 600; line-height: 32px; text-align: center; }
.s-batt { width: 52px; height: 26px; margin-right: 36px; }
.s-wifi { width: 36px; height: 26px; margin-right: 38px; }
.s-find { width: 27px; height: 27px; margin-right: 27px; margin-top: 2px; }
.s-cc { width: 29px; height: 28px; margin-right: 11px; }
.rec-dot { width: 10px; height: 10px; border-radius: 50%; background: #ef9a37; margin-right: 22px; }
.date { margin-right: 19px; letter-spacing: -.25px; }
.time { letter-spacing: .3px; }

/* window */
.window { margin-top: 2px; height: 1707px; display: flex; flex-direction: column; border-radius: 20px; overflow: hidden; background: #110008; box-shadow: 0 6px 30px rgba(0,0,0,.5); }
.titlebar { height: 56px; display: flex; align-items: center; gap: 16px; padding-left: 16px; background: #f9f5f1; flex: none; }
.light { width: 24px; height: 24px; border-radius: 50%; }
.red { background: #ed6a5e; } .yellow { background: #f5bf4f; } .green { background: #61c554; }
.win-title { flex: 1; display: flex; align-items: center; gap: 10px; margin-left: 1214px; padding-bottom: 1px; color: #474441; font-family: Inter, sans-serif; font-size: 26px; line-height: 55px; white-space: nowrap; }
.win-title svg { width: 29px; height: 28px; }
.toolbar { --under: #1e1e1e; height: 96px; flex: none; display: flex; align-items: center; border-top: 2px solid #000; background: #1e1e1e; color: #8e8e8e; padding-left: 43px; }
.chev { width: 22px; height: 14px; }
.room-logo { width: 56px; height: 62px; margin-right: 51px; }
.room { font-size: 28px; color: #b9b9b9; white-space: nowrap; width: 468px; margin-top: -2px; }
.room-chev { color: #d0d0d0; }
.t-speaker { width: 36px; height: 32px; color: #4fae83; margin: 0 14px 0 86px; }
.t-mic { width: 32px; height: 32px; color: #dc5a5c; margin: 0 16px 0 82px; }
.t-cam { width: 30px; height: 20px; margin: 0 18px 0 82px; }
.t-hand { width: 34px; height: 32px; margin: 0 15px 0 80px; }
.tools-right { margin-left: auto; display: flex; align-items: center; padding-right: 29px; }
.t-signal { width: 42px; height: 34px; margin-right: 38px; }
.t-help { width: 32px; height: 32px; margin-right: 52px; }
.t-full { width: 32px; height: 28px; }

.workspace { flex: 1; display: grid; grid-template-columns: 630px 2285px; gap: 7px; padding: 8px 10px 9px 8px; letter-spacing: -.5px; }
.left { display: grid; grid-template-rows: 469px 512px 545px; row-gap: 6px; }
.pod { border: 2px solid #dedede; background: #f4f4f4; overflow: hidden; display: flex; flex-direction: column; }
.pod-head { height: 62px; flex: none; display: flex; align-items: center; padding: 0 16px 1px 20px; background: #c4c4c4; border-bottom: 2px solid #ebebeb; color: #3d2f2f; }
.pod-head h2 { margin-right: auto; font-size: 20px; font-weight: 600; letter-spacing: .9px; color: #1a0d10; white-space: nowrap; }
.share .pod-head h2 { letter-spacing: 1.400px; }
.pod-chat .pod-head h2 { letter-spacing: .2px; }
.i-full { width: 32px; height: 28px; margin-right: 16px; }
.i-dots { width: 32px; height: 10px; }

/* video */
.video-bar { height: 66px; flex: none; border-bottom: 2px solid #e4e4e4; padding: 8px 20px; }
.btn-cam { width: 359px; height: 48px; border-radius: 8px; background: #fafafa; border: 1px solid #e6e6e6; display: flex; align-items: center; padding: 0 0 2px 20px; gap: 15px; color: #6b6b6b; font-size: 22px; letter-spacing: -.4px; white-space: nowrap; }
.btn-cam svg { width: 21px; height: 14px; color: #5f5f5f; margin-top: 2px; }
.video-empty { flex: 1; text-align: center; padding-top: 137px; font-size: 26px; line-height: 44px; letter-spacing: -.77px; color: #707070; white-space: nowrap; }

/* attendees */
.group { height: 61px; flex: none; display: flex; align-items: center; padding: 0 0 1px 23px; gap: 18px; font-size: 22px; color: #4b4b4b; border-bottom: 2px solid #e0e0e0; background: #f5f5f5; }
.group b { letter-spacing: -1px; }
.group .chev { color: #6a6a6a; }
.person { --under: #eaeaea; height: 62.200px; flex: none; display: flex; align-items: center; padding: 1px 17px 0 60px; background: #eaeaea; border-bottom: 2px solid #dfdfdf; font-size: 22px; color: #4b4b4b; white-space: nowrap; }
.person em { font-style: normal; color: #757575; margin-left: 9px; letter-spacing: -.6px; }
.p-icons { margin-left: auto; display: flex; align-items: center; gap: 19px; color: #6e6e6e; margin-right: 1px; margin-top: -1px; }
.waves { width: 20px; height: 32px; margin-left: 16px; color: #333; }
.i-mic { width: 20px; height: 32px; margin-right: 7px; }
.i-globe { width: 34px; height: 34px; }
.i-micoff { width: 32px; height: 32px; }

/* chat */
.tabs { height: 66px; margin: 0 20px; flex: none; display: flex; align-items: stretch; padding-left: 14px; gap: 25px; border-bottom: 2px solid #e6e6e6; font-size: 22px; color: #2c2c2c; }
.tab { width: 38px; line-height: 62px; border-bottom: 3px solid #2c2c2c; margin-bottom: -1px; }
.plus { width: 24px; height: 24px; margin-top: 21px; }
.messages { flex: 1; padding: 4px 20px; display: flex; flex-direction: column; align-items: flex-start; gap: 6px; }
.msg { height: 57px; line-height: 55px; padding: 0 26px 0 16px; border-radius: 8px; background: #e9e9e9; font-size: 22px; color: #4b4b4b; white-space: nowrap; letter-spacing: -.45px; }
.msg b { letter-spacing: -.85px; }
.chat-input { height: 64px; flex: none; display: flex; align-items: center; padding: 0 20px 2px 24px; border-top: 2px solid #dcdcdc; border-bottom: 2px solid #3b73d6; background: linear-gradient(#fff, #f3f3f3); font-size: 22px; color: #333; white-space: nowrap; }
.caret { width: 2px; height: 31px; background: #333; margin-right: -2px; }
.send { width: 28px; height: 28px; margin-left: auto; }

/* share pod */
.btn-stop { width: 440px; height: 50px; margin-right: 24px; padding-left: 16px; border-radius: 6px; background: #fafafa; border: 2px solid #dadada; color: #6b6b6b; font-size: 22px; line-height: 44px; letter-spacing: -.56px; white-space: nowrap; }
.h-pen { width: 34px; height: 30px; margin-right: 30px; }
.h-tap { width: 28px; height: 28px; margin-right: 35px; }
.h-sync { width: 36px; height: 30px; margin-right: 30px; }
.share-body { height: 1408px; flex: none; display: flex; }
.drawbar { width: 98px; flex: none; background: #d5d5d5; border-right: 2px solid #ebebeb; display: flex; flex-direction: column; padding-left: 32px; padding-top: 35px; }
.d-arrow { width: 24px; height: 36px; margin-left: 6px; }
.d-item { display: flex; height: 48px; align-items: flex-start; }
.corner { width: 14px; height: 14px; align-self: flex-end; color: #6e6e6e; margin-left: -1px; }
.d-pen { margin-top: 47px; margin-left: -2px; } .d-pen .g { width: 36px; height: 35px; }
.d-text { width: 29px; height: 29px; margin: 39px 0 0 1px; }
.d-rect { margin-top: 53px; margin-left: -1px; height: 45px; } .d-rect .g { width: 34px; height: 30px; }
.d-undo { width: 32px; height: 26px; margin-top: 762px; }
.d-redo { width: 32px; height: 26px; margin-top: 57px; }
.d-trash { width: 30px; height: 34px; margin-top: 54px; }
.d-layers { margin-top: 51px; height: 47px; } .d-layers .g { width: 34px; height: 34px; } .d-layers .corner { color: #b7b7b7; }
.canvas { flex: 1; background: #323232; padding: 103px 0 0 242px; }

/* slide */
.slide { width: 1601px; height: 1201px; background: #fff; position: relative; padding: 0 28px 0 34px; font-family: "Liberation Serif", serif; font-size: 36px; line-height: 41px; letter-spacing: 0; color: #2e2e33; }
.slide h1 { height: 116px; padding: 5px 0 0 29px; font: 700 73.800px/100px Lato, "Noto Sans", sans-serif; color: #000; white-space: nowrap; }
.ln { height: 41px; text-align: justify; text-align-last: justify; }
.h39 { height: 39px; }
.in1 { padding-left: 41px; } .in2 { padding-left: 64px; }
.it { letter-spacing: .3px; }
.it b { letter-spacing: 1.500px; margin-right: 12px; }
.w505 { width: 505px; letter-spacing: .3px; } .w540 { width: 540px; } .w1318 { width: 1318px; } .w852 { width: 852px; letter-spacing: .15px; } .w625 { width: 625px; letter-spacing: .4px; } .w163 { width: 163px; letter-spacing: .5px; } .w1501 { width: 1501px; }
.math { letter-spacing: .9px; }
.last { margin-bottom: 7px; }
.slide sub, .slide sup { font-size: 26px; line-height: 0; }
.slide sub { vertical-align: -6px; } .slide sup { vertical-align: 14px; } .slide sup sub, .slide sup sup { font-size: 21px; }
.slide sup sup { vertical-align: 8px; }
.eq { white-space: nowrap; font-size: 37px; }
.eq1 { height: 60px; padding: 6px 0 0 622px; letter-spacing: 2px; }
.eq2 { height: 117px; padding: 34px 0 0 501px; letter-spacing: .9px; }
.eq3 { height: 82px; padding: 21px 0 0 579px; letter-spacing: 1.600px; }
.eq4 { height: 84px; padding: 20px 0 0 656px; letter-spacing: 1.700px; }
.frac { display: inline-flex; flex-direction: column; text-align: center; vertical-align: middle; margin: -40px 0; line-height: 43px; padding: 0 2px; position: relative; top: -6px; }
.frac > :first-child { border-bottom: 2px solid #333; }
.frac.sm { font-size: 24px; line-height: 24px; margin: -20px 0; top: -3px; letter-spacing: 0; }
.frac.sum { top: -1px; }
.big { font-size: 44px; line-height: 0; }
.num { display: flex; align-items: center; }
.sigma { font-size: 48px; margin-right: 1px; }
.lim { display: inline-flex; flex-direction: column; font-size: 23px; line-height: 21px; letter-spacing: 3px; text-align: left; margin-right: 7px; }
.slide-foot { display: flex; align-items: flex-start; padding: 38px 55px 0 38px; }
.shield { width: 68px; height: 78px; }
.foot-line { width: 2px; height: 76px; background: #dcdcdc; margin-left: 27px; }
.page-no { margin-left: auto; font: 24px/30px Lato, sans-serif; color: #8a8a8a; padding-top: 23px; }
.ink { position: absolute; left: 0; top: 0; width: 1600px; height: 1201px; }

.pagebar { flex: 1; display: flex; align-items: center; background: linear-gradient(#f4f4f4, #dedede); color: #6a6a6a; font-size: 22px; padding-left: 753px; }
.b-round { width: 36px; height: 36px; }
.b-down { margin-left: 32px; }
.pagebar span { color: #3c3c3c; margin-top: -2px; }
.pagebar .pg-cur { margin-left: 61px; width: 53px; } .pg-slash { width: 39px; } .pg-all { width: 55px; }
.pg-group { display: flex; align-items: center; height: 56px; border-left: 2px solid #bbb; }
.pointer { width: 171px; padding-left: 41px; } .b-cursor { width: 22px; height: 36px; margin-right: 39px; } .b-hand { width: 34px; height: 36px; }
.zoom { width: 297px; padding-left: 32px; border-right: 2px solid #bbb; }
.zoom .b-round { margin-right: 32px; }
.pagebar .pct { font-size: 25px; width: 73px; margin-left: -1px; }

/* dock */
.dock { margin: 3px 0 0 78px; width: 2783px; height: 118px; display: flex; padding: 0 5px; border-radius: 36px; border: 2px solid rgba(255,255,255,.22);
  background: linear-gradient(90deg, #7095c4 0, #6f99cb 380px, #9b96a0 480px, #e09160 590px, #e49f5c 720px, #e9935c 900px, #ec8c5c 1080px, #e69c5a 1250px, #e98e5b 1500px, #ec7f5b 1850px, #ea8b5a 2050px, #ea9b58 2200px, #ec925a 2400px, #ee8759 2783px); }
.slot { width: 95.900px; flex: none; display: flex; justify-content: center; padding-top: 16px; position: relative; }
.slot > svg { width: 72px; height: 72px; filter: drop-shadow(0 2px 2px rgba(0,0,0,.2)); }
.slot.on::after { content: ""; position: absolute; left: 44px; top: 104px; width: 8px; height: 8px; border-radius: 50%; background: #0a1c55; }
.slot.warm::after { background: #7a0f00; }
.slot > .tall { width: 74px; height: 76px; }
.slot > .connect { width: 84px; height: 82px; margin-top: -8px; }
.slot > .stack { width: 54px; height: 86px; margin-top: -8px; }
.slot > .thumb { width: 84px; height: 76px; }
.slot > .trash { width: 62px; height: 82px; margin-top: -5px; }
.sep { width: 44px; flex: none; border-left: 2px solid #b4552f; height: 86px; margin: 14px -21px 0 21px; }
.badge { position: absolute; left: 62px; top: 8px; width: 35px; height: 35px; border-radius: 50%; background: #ec4f42; color: #fff; font: 24px/35px Inter, sans-serif; text-align: center; }
.petals ellipse { mix-blend-mode: multiply; opacity: .85; }
.cal-m { font: 700 15px Inter, sans-serif; fill: #fff; text-anchor: middle; }
.cal-d { font: 40px Inter, sans-serif; fill: #222; text-anchor: middle; }
.tv { font: 600 32px Inter, sans-serif; fill: #fff; }
```
